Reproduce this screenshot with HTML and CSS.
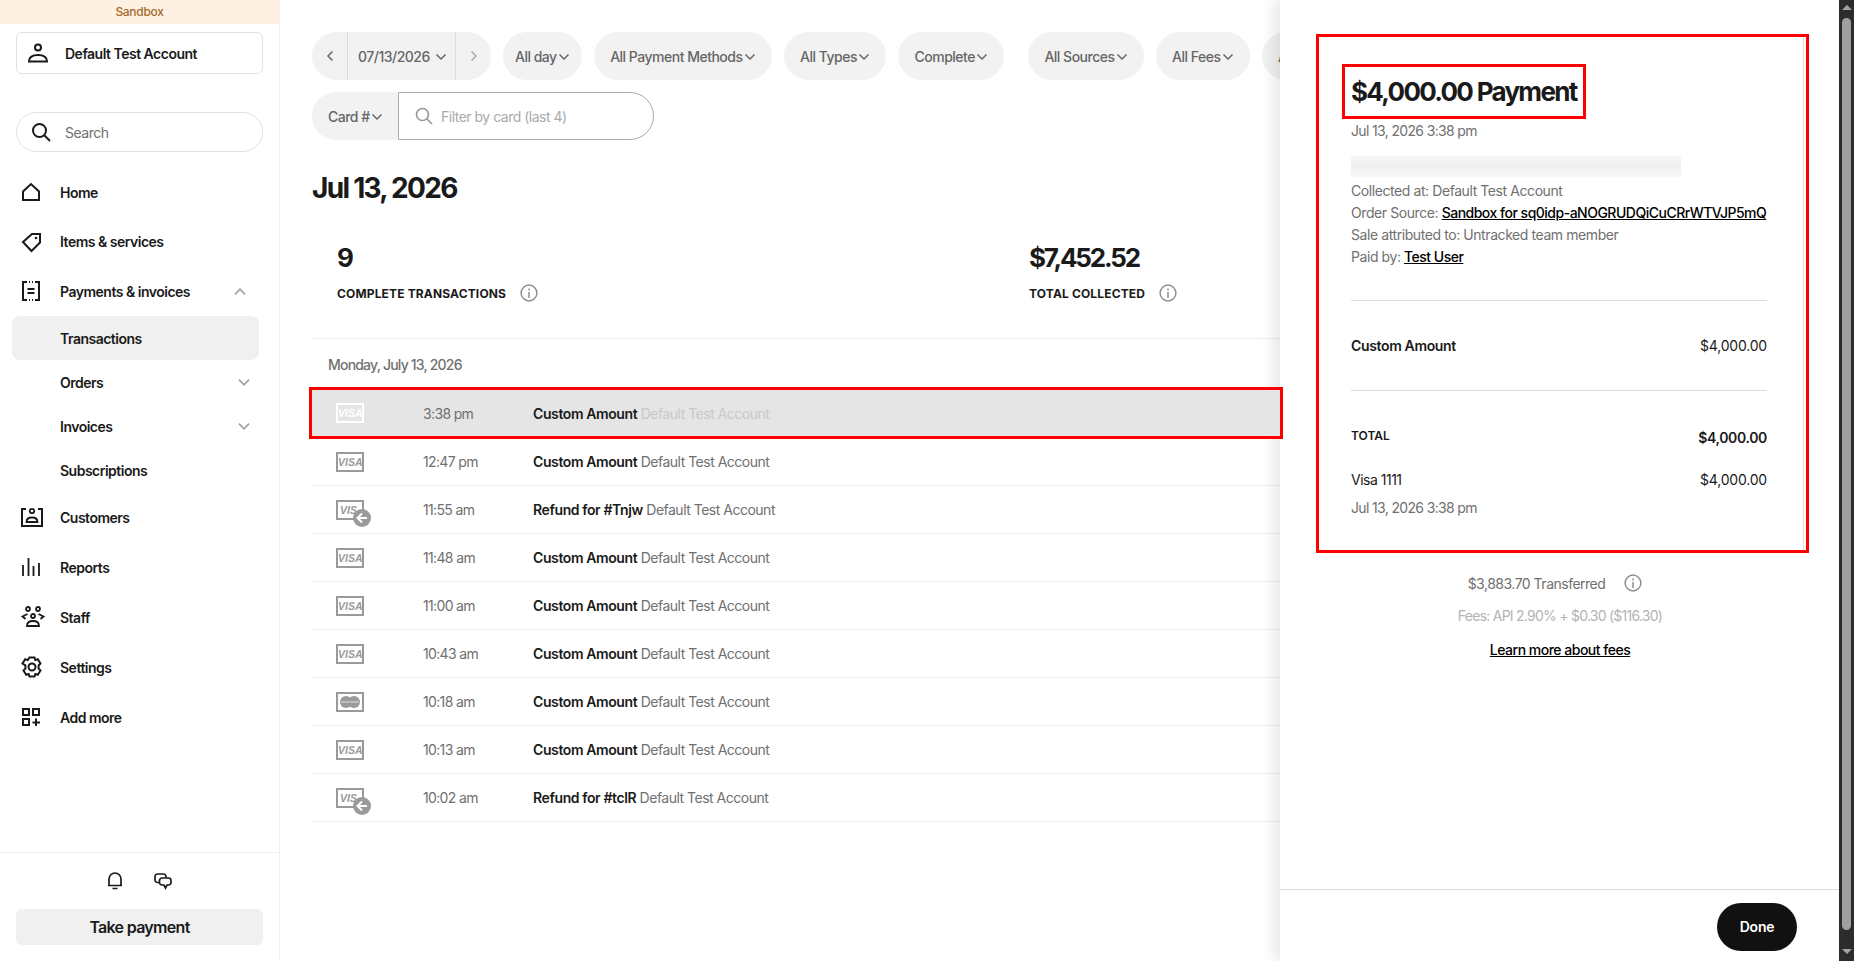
FILE: index.html
```html
<!DOCTYPE html>
<html lang="en">

<head>
    <meta charset="UTF-8">
    <meta name="viewport" content="width=device-width, initial-scale=1.0">
    <title>Transactions</title>
    <link rel="stylesheet" href="styles.css">
</head>

<body>
    <svg class="defs" width="0" height="0">
        <symbol id="chev" viewBox="0 0 12 8"><path d="M1.5 1.5 6 6l4.5-4.5" fill="none" stroke="currentColor" stroke-width="1.5"/></symbol>
        <symbol id="info" viewBox="0 0 18 18"><circle cx="9" cy="9" r="7.9" fill="none" stroke="#8f8f8f" stroke-width="1.5"/><path d="M9 8v6M9 4.6v1.8" stroke="#8f8f8f" stroke-width="1.5"/></symbol>
        <symbol id="master" viewBox="0 0 28 20"><rect x="1" y="1" width="26" height="18" fill="none" stroke="currentColor" stroke-width="2"/><circle cx="10" cy="10" r="6" fill="currentColor"/><circle cx="18" cy="10" r="6" fill="currentColor"/><path d="M5 10h18" stroke="#fff" stroke-width="1" opacity="0.7"/></symbol>
        <symbol id="back" viewBox="0 0 18 18"><circle cx="9" cy="9" r="9" fill="currentColor"/><path d="M14 9H5M9 4.500 4.500 9 9 13.500" fill="none" stroke="#fff" stroke-width="2"/></symbol>
    </svg>

    <aside class="sidebar">
        <div class="sandbox">Sandbox</div>
        <div class="account">
            <svg class="account-icon" viewBox="0 0 22 20" width="22" height="20"><circle cx="11" cy="4.500" r="3" fill="none" stroke="#1a1a1a" stroke-width="2"/><path d="M2 18.500c0-4 3-6.500 9-6.500s9 2.500 9 6.500z" fill="none" stroke="#1a1a1a" stroke-width="2"/></svg>
            <span>Default Test Account</span>
        </div>
        <div class="search">
            <svg viewBox="0 0 20 20" width="20" height="20"><circle cx="8.500" cy="8.500" r="6.500" fill="none" stroke="#1a1a1a" stroke-width="2"/><path d="m13 13 6 6" stroke="#1a1a1a" stroke-width="2"/></svg>
            <span>Search</span>
        </div>
        <nav class="nav">
            <a class="nav-item">
                <svg viewBox="0 0 20 20" width="20" height="20"><path d="M2 18V9.500L10 2l8 7.500V18z" fill="none" stroke="#1a1a1a" stroke-width="2"/></svg>
                Home
            </a>
            <a class="nav-item">
                <svg viewBox="0 0 22 22" width="22" height="22"><path d="m2 11 9-8h8v8.500L10.500 20z" fill="none" stroke="#1a1a1a" stroke-width="2"/><circle cx="15" cy="7" r="1.300" fill="#1a1a1a"/></svg>
                Items &amp; services
            </a>
            <a class="nav-item">
                <svg viewBox="0 0 20 22" width="20" height="22"><path d="M6 2H2v18h4M14 2h4v18h-4M8 2h1M11 2h1M8 20h1M11 20h1M6.500 9h7M6.500 13h7" fill="none" stroke="#1a1a1a" stroke-width="2"/></svg>
                Payments &amp; invoices
                <svg class="nav-chev up" width="14" height="9"><use href="#chev"/></svg>
            </a>
            <a class="sub-item active">Transactions</a>
            <a class="sub-item">Orders<svg class="nav-chev" width="14" height="9"><use href="#chev"/></svg></a>
            <a class="sub-item">Invoices<svg class="nav-chev" width="14" height="9"><use href="#chev"/></svg></a>
            <a class="sub-item">Subscriptions</a>
            <a class="nav-item">
                <svg viewBox="0 0 22 20" width="22" height="20"><path d="M5 2H1v17h20V2h-4" fill="none" stroke="#1a1a1a" stroke-width="2"/><circle cx="11" cy="4" r="2.200" fill="none" stroke="#1a1a1a" stroke-width="1.800"/><path d="M5.500 15c0-3 2-4.500 5.500-4.500s5.500 1.500 5.500 4.500z" fill="none" stroke="#1a1a1a" stroke-width="1.800"/></svg>
                Customers
            </a>
            <a class="nav-item">
                <svg viewBox="0 0 20 20" width="20" height="20"><path d="M2 8v11M7.500 1v18M12.500 9v10M18 6v13" stroke="#1a1a1a" stroke-width="1.800"/></svg>
                Reports
            </a>
            <a class="nav-item">
                <svg viewBox="0 0 24 22" width="24" height="22"><g fill="none" stroke="#1a1a1a" stroke-width="1.800"><circle cx="7" cy="3" r="2"/><circle cx="17" cy="3" r="2"/><circle cx="12" cy="10" r="2"/><path d="M6 20c0-3 2-5 6-5s6 2 6 5zM6.500 8 1.500 10.500l3 2.500M17.500 8l5 2.500-3 2.500"/></g></svg>
                Staff
            </a>
            <a class="nav-item">
                <svg viewBox="0 0 22 22" width="22" height="22"><g fill="none" stroke="#1a1a1a" stroke-width="2"><circle cx="11" cy="11" r="3.500"/><path d="m8.500 1.500h5l.8 2.600 2.500-.8 2.700 4.200-1.900 1.900v3.200l1.900 1.900-2.700 4.200-2.500-.8-.8 2.600h-5l-.8-2.600-2.500.8-2.700-4.200 1.900-1.900V9.400L1.500 7.500l2.700-4.200 2.500.8z"/></g></svg>
                Settings
            </a>
            <a class="nav-item">
                <svg viewBox="0 0 20 20" width="20" height="20"><path d="M2 2h6v6H2zM12 2h6v6h-6zM2 12h6v6H2zM15 11.500v7.500M11.500 15.500h7.500" fill="none" stroke="#1a1a1a" stroke-width="2"/></svg>
                Add more
            </a>
        </nav>
        <div class="side-foot">
            <div class="foot-icons">
                <svg viewBox="0 0 16 18" width="16" height="18"><path d="M2 13.500V7a6 6 0 0 1 12 0v6.500zM1 13.500h14M5.500 16.500h5" fill="none" stroke="#1a1a1a" stroke-width="1.700"/></svg>
                <svg viewBox="0 0 18 18" width="18" height="18"><g fill="none" stroke="#1a1a1a" stroke-width="1.700"><path d="M5 10.500H3.500A2.500 2.500 0 0 1 1 8V4.500A2.500 2.500 0 0 1 3.500 2h6A2.500 2.500 0 0 1 12 4.500V6"/><path d="M8 6h6.500A2.500 2.500 0 0 1 17 8.500v2a2.500 2.500 0 0 1-2.500 2.500H13l-1.500 3-1.500-3H8a2.500 2.500 0 0 1-2.500-2.500v-2A2.500 2.500 0 0 1 8 6z"/></g></svg>
            </div>
            <button class="take-payment">Take payment</button>
        </div>
    </aside>

    <main class="main">
        <div class="filters">
            <div class="date-pill">
                <span class="date-arrow"><svg class="left" width="12" height="8"><use href="#chev"/></svg></span>
                <span class="date-value">07/13/2026<svg width="12" height="8"><use href="#chev"/></svg></span>
                <span class="date-arrow"><svg class="right" width="12" height="8"><use href="#chev"/></svg></span>
            </div>
            <div class="pill tight">All day<svg width="12" height="8"><use href="#chev"/></svg></div>
            <div class="pill">All Payment Methods<svg width="12" height="8"><use href="#chev"/></svg></div>
            <div class="pill">All Types<svg width="12" height="8"><use href="#chev"/></svg></div>
            <div class="pill">Complete<svg width="12" height="8"><use href="#chev"/></svg></div>
            <div class="pill wide-gap">All Sources<svg width="12" height="8"><use href="#chev"/></svg></div>
            <div class="pill">All Fees<svg width="12" height="8"><use href="#chev"/></svg></div>
            <div class="pill">All Devices<svg width="12" height="8"><use href="#chev"/></svg></div>
        </div>
        <div class="card-filter">
            <div class="card-select">Card #<svg width="12" height="8"><use href="#chev"/></svg></div>
            <div class="card-input">
                <svg viewBox="0 0 18 18" width="18" height="18"><circle cx="7.500" cy="7.500" r="6" fill="none" stroke="#999" stroke-width="1.700"/><path d="m12 12 5 5" stroke="#999" stroke-width="1.700"/></svg>
                <span>Filter by card (last 4)</span>
            </div>
        </div>

        <h1 class="day-title">Jul 13, 2026</h1>

        <div class="stats">
            <div class="stat">
                <div class="stat-value">9</div>
                <div class="stat-label">Complete transactions<svg width="18" height="18"><use href="#info"/></svg></div>
            </div>
            <div class="stat">
                <div class="stat-value">$7,452.52</div>
                <div class="stat-label">Total collected<svg width="18" height="18"><use href="#info"/></svg></div>
            </div>
        </div>

        <div class="day-head">Monday, July 13, 2026</div>
        <div class="rows">
            <div class="row selected">
                <span class="card-mark">VISA</span>
                <span class="time">3:38 pm</span>
                <span><b>Custom Amount</b> <span class="who">Default Test Account</span></span>
            </div>
            <div class="row">
                <span class="card-mark">VISA</span>
                <span class="time">12:47 pm</span>
                <span><b>Custom Amount</b> <span class="who">Default Test Account</span></span>
            </div>
            <div class="row">
                <span class="card-mark refund">VIS<svg width="18" height="18"><use href="#back"/></svg></span>
                <span class="time">11:55 am</span>
                <span><b>Refund for #Tnjw</b> <span class="who">Default Test Account</span></span>
            </div>
            <div class="row">
                <span class="card-mark">VISA</span>
                <span class="time">11:48 am</span>
                <span><b>Custom Amount</b> <span class="who">Default Test Account</span></span>
            </div>
            <div class="row">
                <span class="card-mark">VISA</span>
                <span class="time">11:00 am</span>
                <span><b>Custom Amount</b> <span class="who">Default Test Account</span></span>
            </div>
            <div class="row">
                <span class="card-mark">VISA</span>
                <span class="time">10:43 am</span>
                <span><b>Custom Amount</b> <span class="who">Default Test Account</span></span>
            </div>
            <div class="row">
                <svg class="card-icon" width="28" height="20"><use href="#master"/></svg>
                <span class="time">10:18 am</span>
                <span><b>Custom Amount</b> <span class="who">Default Test Account</span></span>
            </div>
            <div class="row">
                <span class="card-mark">VISA</span>
                <span class="time">10:13 am</span>
                <span><b>Custom Amount</b> <span class="who">Default Test Account</span></span>
            </div>
            <div class="row">
                <span class="card-mark refund">VIS<svg width="18" height="18"><use href="#back"/></svg></span>
                <span class="time">10:02 am</span>
                <span><b>Refund for #tclR</b> <span class="who">Default Test Account</span></span>
            </div>
        </div>
    </main>

    <section class="drawer">
        <div class="drawer-body">
            <div class="receipt">
                <h2 class="receipt-title">$4,000.00 Payment</h2>
                <div class="muted receipt-date">Jul 13, 2026 3:38 pm</div>
                <div class="blurred"></div>
                <div class="meta muted">Collected at: Default Test Account</div>
                <div class="meta muted">Order Source: <a class="link">Sandbox for sq0idp-aNOGRUDQiCuCRrWTVJP5mQ</a></div>
                <div class="meta muted">Sale attributed to: Untracked team member</div>
                <div class="meta muted">Paid by: <a class="link">Test User</a></div>
                <div class="line-item">
                    <b>Custom Amount</b>
                    <span class="money">$4,000.00</span>
                </div>
                <div class="total-row">
                    <span class="total-label">Total</span>
                    <b>$4,000.00</b>
                </div>
                <div class="tender-row">
                    <span>Visa 1111</span>
                    <span class="money">$4,000.00</span>
                </div>
                <div class="muted tender-date">Jul 13, 2026 3:38 pm</div>
            </div>
            <div class="transfer muted">$3,883.70 Transferred<svg width="18" height="18"><use href="#info"/></svg></div>
            <div class="fees">Fees: API 2.90% + $0.30 ($116.30)</div>
            <a class="link learn">Learn more about fees</a>
        </div>
        <div class="drawer-foot">
            <button class="done">Done</button>
        </div>
    </section>

    <div class="scrollbar">
        <span class="arrow-up"></span>
        <span class="thumb"></span>
        <span class="arrow-down"></span>
    </div>
</body>

</html>
```

FILE: styles.css
```css
* {
    box-sizing: border-box;
}

html,
body {
    height: 100%;
}

body {
    margin: 0;
    display: flex;
    height: 961px;
    overflow: hidden;
    background: #fff;
    color: #1a1a1a;
    font-family: Inter, "Liberation Sans", sans-serif;
    font-size: 14px;
    letter-spacing: -0.5px;
}

.defs {
    position: absolute;
}

/* sidebar */
.sidebar {
    width: 280px;
    flex: none;
    display: flex;
    flex-direction: column;
    border-right: 1px solid #f0f0f0;
}

.sandbox {
    height: 24px;
    line-height: 24px;
    background: #fef1e3;
    color: #a8682a;
    font-size: 12px;
    font-weight: 500;
    letter-spacing: -0.3px;
    text-align: center;
}

.account {
    margin: 8px 16px 0;
    height: 42px;
    display: flex;
    align-items: center;
    gap: 16px;
    padding-left: 10px;
    border: 1px solid #e0e0e0;
    border-radius: 6px;
    font-weight: 600;
}

.search {
    margin: 38px 16px 0;
    height: 40px;
    display: flex;
    align-items: center;
    gap: 14px;
    padding-left: 14px;
    border: 1px solid #e0e0e0;
    border-radius: 20px;
    color: #707070;
}

.nav {
    margin-top: 15.5px;
    display: flex;
    flex-direction: column;
}

.nav-item,
.sub-item {
    display: flex;
    align-items: center;
    position: relative;
    font-weight: 600;
}

.nav-item {
    height: 50px;
    padding-left: 60px;
}

.nav-item:nth-child(-n+3) {
    height: 49.5px;
}

.nav-item > svg:first-child {
    position: absolute;
    left: 21px;
}

.sub-item {
    height: 44px;
    margin-right: 20px;
    margin-left: 12px;
    padding-left: 48px;
    border-radius: 8px;
}

.sub-item.active {
    background: #f0f0f0;
}

.nav-chev {
    margin-left: auto;
    color: #a0a0a0;
}

.sub-item .nav-chev {
    margin-right: 8px;
}

.nav-item .nav-chev {
    margin-right: 32px;
}

.up {
    transform: rotate(180deg);
}

.side-foot {
    margin-top: auto;
    height: 109px;
    border-top: 1px solid #eee;
    padding: 0 16px;
}

.foot-icons {
    display: flex;
    justify-content: center;
    gap: 31px;
    padding-top: 19px;
    height: 56px;
}

.take-payment {
    width: 100%;
    height: 36px;
    border: 0;
    border-radius: 6px;
    background: #f0f0f0;
    color: #1a1a1a;
    font: inherit;
    font-size: 16px;
    font-weight: 600;
    letter-spacing: -0.7px;
}

/* main */
.main {
    flex: 1;
    min-width: 0;
    padding: 32px 0 0 32px;
}

.filters {
    display: flex;
    gap: 12px;
    overflow: hidden;
    color: #666;
    font-weight: 500;
}

.date-pill,
.pill,
.card-select {
    height: 48px;
    background: #f2f2f2;
    display: flex;
    align-items: center;
    flex: none;
    white-space: nowrap;
}

.pill {
    padding: 0 16px;
    border-radius: 24px;
}

.pill svg,
.date-value svg,
.card-select svg {
    margin-left: 1.5px;
    margin-top: 2px;
}

.pill.tight {
    padding: 0 12px;
}

.wide-gap {
    margin-left: 12px;
}

.date-pill {
    border-radius: 24px;
}

.date-arrow {
    width: 35px;
    display: flex;
    justify-content: center;
    color: #666;
}

.date-arrow .left {
    transform: rotate(90deg);
}

.date-arrow .right {
    transform: rotate(-90deg);
    color: #aaa;
}

.date-value {
    height: 48px;
    width: 109px;
    display: flex;
    align-items: center;
    padding-left: 10px;
    border-left: 1px solid #dcdcdc;
    border-right: 1px solid #dcdcdc;
}

.date-value svg {
    margin-left: 5px;
}

.card-filter {
    display: flex;
    margin-top: 12px;
    color: #666;
    font-weight: 500;
}

.card-select {
    width: 86px;
    padding-left: 16px;
    border-radius: 24px 0 0 24px;
}

.card-input {
    width: 256px;
    height: 48px;
    display: flex;
    align-items: center;
    gap: 8px;
    padding-left: 16px;
    border: 1px solid #aaa;
    border-radius: 0 24px 24px 0;
    color: #aaa;
    font-weight: 400;
}

.day-title {
    margin: 30px 0 0;
    font-size: 28px;
    line-height: 36px;
    font-weight: 700;
    letter-spacing: -1.7px;
}

.stats {
    display: grid;
    grid-template-columns: 692px 1fr;
    height: 133px;
    padding: 36px 0 0 25px;
    border-bottom: 1px solid #eee;
}

.stat-value {
    font-size: 26px;
    line-height: 32px;
    font-weight: 700;
    letter-spacing: -2.2px;
}

.stat-label {
    margin-top: 10px;
    display: flex;
    align-items: center;
    gap: 14px;
    height: 18px;
    font-size: 12px;
    font-weight: 700;
    letter-spacing: 0.15px;
    text-transform: uppercase;
}

.day-head {
    height: 51px;
    line-height: 52px;
    padding-left: 16px;
    color: #707070;
    font-weight: 500;
    letter-spacing: -0.8px;
}

.row {
    height: 48px;
    display: grid;
    grid-template-columns: 87px 110px 1fr;
    align-items: center;
    padding-left: 24px;
    border-bottom: 1px solid #f0f0f0;
    position: relative;
}

.row b {
    font-weight: 600;
    letter-spacing: -0.4px;
}

.card-mark,
.card-icon {
    display: block;
    width: 28px;
    height: 20px;
    color: #9a9a9a;
}

.card-mark {
    border: 2px solid #9a9a9a;
    font-family: "Liberation Sans", sans-serif;
    font-size: 10.5px;
    font-weight: 700;
    font-style: italic;
    line-height: 16px;
    letter-spacing: 0;
    text-align: center;
    position: relative;
}

.card-mark.refund {
    text-align: left;
    padding-left: 2px;
}

.card-mark svg {
    position: absolute;
    left: 15px;
    top: 7px;
}

.time,
.who {
    color: #707070;
}

.time {
    letter-spacing: -0.65px;
}

.row.selected {
    background: #e5e5e5;
    border-bottom: 0;
    height: 46px;
    margin: 0 0 2px;
    outline: 3px solid #f00;
    z-index: 2;
}

.selected .who {
    color: #c9c9c9;
}

.selected .card-mark {
    color: #fff;
    border-color: #fff;
}

/* drawer */
.drawer {
    width: 559px;
    flex: none;
    display: flex;
    flex-direction: column;
    background: #fff;
    position: relative;
    z-index: 1;
    box-shadow: -6px 0 14px rgba(0, 0, 0, 0.1);
}

.drawer-body {
    flex: 1;
    padding: 34px 35px 0 36px;
    text-align: center;
}

.receipt {
    width: 493px;
    height: 519px;
    padding: 30px 0 0 32px;
    border: 3px solid #f00;
    text-align: left;
    position: relative;
}

.receipt::after {
    content: "";
    position: absolute;
    top: 0;
    bottom: 0;
    right: 2px;
    border-right: 1px solid #ddd;
}

.receipt-title {
    display: table;
    margin: -3px 0 0 -9px;
    height: 55px;
    line-height: 49px;
    padding: 0 7px 0 6px;
    border: 3px solid #f00;
    font-size: 26px;
    font-weight: 700;
    letter-spacing: -1.7px;
}

.muted {
    color: #707070;
}

.receipt-date,
.tender-date {
    letter-spacing: -0.65px;
}

.receipt-date {
    margin-top: 2px;
    line-height: 20px;
}

.blurred {
    width: 330px;
    height: 21px;
    margin: 15px 0 3px;
    background: linear-gradient(#f8f8f8, #efefef 50%, #f8f8f8);
}

.meta {
    line-height: 22px;
    letter-spacing: -0.42px;
}

.link {
    color: #000;
    font-weight: 500;
    letter-spacing: -0.5px;
    text-decoration: underline;
}

.line-item,
.total-row,
.tender-row {
    width: 416px;
    display: flex;
    justify-content: space-between;
}

.money {
    letter-spacing: -0.2px;
}

.line-item {
    margin-top: 32px;
    height: 91px;
    border-top: 1px solid #ddd;
    border-bottom: 1px solid #ddd;
    align-items: center;
}

.line-item b,
.total-row b {
    font-weight: 600;
    letter-spacing: -0.35px;
}

.total-row {
    margin-top: 36px;
    height: 20px;
    align-items: center;
}

.total-label {
    margin-top: -3px;
    font-size: 12px;
    font-weight: 600;
    letter-spacing: 0;
    text-transform: uppercase;
}

.tender-row {
    margin-top: 23px;
    line-height: 20px;
}

.tender-date {
    margin-top: 8px;
    line-height: 20px;
}

.transfer {
    margin-top: 20px;
    padding-right: 10px;
    display: flex;
    align-items: center;
    justify-content: center;
    gap: 19px;
    height: 20px;
}

.fees {
    margin-top: 13px;
    line-height: 20px;
    color: #b3b3b3;
    letter-spacing: -0.75px;
}

.learn {
    display: inline-block;
    margin-top: 14px;
    line-height: 20px;
}

.drawer-foot {
    height: 72px;
    display: flex;
    align-items: center;
    justify-content: flex-end;
    padding-right: 42px;
    border-top: 1px solid #ddd;
}

.done {
    width: 80px;
    height: 48px;
    margin-top: 2px;
    border: 0;
    border-radius: 24px;
    background: #111;
    color: #fff;
    font: inherit;
    font-weight: 600;
    letter-spacing: -0.2px;
}

/* browser scrollbar */
.scrollbar {
    width: 15px;
    flex: none;
    background: #2c2c2c;
    display: flex;
    flex-direction: column;
    align-items: center;
    position: relative;
    z-index: 1;
}

.arrow-up,
.arrow-down {
    width: 0;
    height: 0;
    border-left: 5px solid transparent;
    border-right: 5px solid transparent;
}

.arrow-up {
    margin-top: 5px;
    border-bottom: 5px solid #a3a3a3;
}

.arrow-down {
    margin-bottom: 7px;
    border-top: 5px solid #a3a3a3;
}

.thumb {
    flex: 1;
    width: 9px;
    margin: 8px 0 19px;
    background: #9f9f9f;
    border-radius: 5px;
}
```
